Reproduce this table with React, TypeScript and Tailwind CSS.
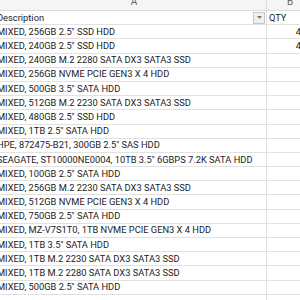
const rows: [string, string][] = [
  ['MIXED, 256GB 2.5" SSD HDD', "4"],
  ['MIXED, 240GB 2.5" SSD HDD', "4"],
  ["MIXED, 240GB M.2 2280 SATA DX3 SATA3 SSD", ""],
  ["MIXED, 256GB NVME PCIE GEN3 X 4 HDD", ""],
  ['MIXED, 500GB 3.5" SATA HDD', ""],
  ["MIXED, 512GB M.2 2230 SATA DX3 SATA3 SSD", ""],
  ['MIXED, 480GB 2.5" SSD HDD', ""],
  ['MIXED, 1TB 2.5" SATA HDD', ""],
  ['HPE, 872475-B21, 300GB 2.5" SAS HDD', ""],
  ['SEAGATE, ST10000NE0004, 10TB 3.5" 6GBPS 7.2K SATA HDD', ""],
  ['MIXED, 100GB 2.5" SATA HDD', ""],
  ["MIXED, 256GB M.2 2230 SATA DX3 SATA3 SSD", ""],
  ["MIXED, 512GB NVME PCIE GEN3 X 4 HDD", ""],
  ['MIXED, 750GB 2.5" SATA HDD', ""],
  ["MIXED, MZ-V7S1T0, 1TB NVME PCIE GEN3 X 4 HDD", ""],
  ['MIXED, 1TB 3.5" SATA HDD', ""],
  ["MIXED, 1TB M.2 2230 SATA DX3 SATA3 SSD", ""],
  ["MIXED, 1TB M.2 2280 SATA DX3 SATA3 SSD", ""],
  ['MIXED, 500GB 2.5" SATA HDD', ""],
  ["", ""],
];

export default function App() {
  return (
    <div className="w-[300px] h-[300px] overflow-hidden bg-white text-[#222] font-['Roboto',sans-serif] text-[9.3px]">
      {/* column letters */}
      <div className="flex h-[11px] bg-[#f5f5f5] border-b border-[#dcdcdc] text-[#666] text-[10px] leading-none">
        <div className="w-[267px] shrink-0 border-r border-[#dcdcdc] flex justify-center items-end pb-[3px]">
          <span className="pl-[2px]">A</span>
        </div>
        <div className="w-[46px] shrink-0 flex justify-center items-end pb-[3px]">B</div>
      </div>

      {/* header row */}
      <div className="flex h-[14.2px] border-b border-[#e1e1e1]">
        <div className="w-[267px] shrink-0 border-r border-[#e1e1e1] flex items-center justify-between">
          <span className="ml-[-3px] whitespace-nowrap">Description</span>
          <div className="w-[12px] h-[12px] mr-[1px] border border-[#c6c6c6] bg-[#f0f0f0] flex items-center justify-center">
            <svg width="5" height="3" viewBox="0 0 5 3">
              <path d="M0 0h5L2.5 3z" fill="#777" />
            </svg>
          </div>
        </div>
        <div className="w-[46px] shrink-0 flex items-center pl-[2px]">QTY</div>
      </div>

      {rows.map(([desc, qty], i) => (
        <div key={i} className="flex h-[14.2px] border-b border-[#e1e1e1]">
          <div className="w-[267px] shrink-0 border-r border-[#e1e1e1] flex items-center">
            <span className="ml-[-3px] whitespace-nowrap">{desc}</span>
          </div>
          <div className="w-[46px] shrink-0 flex items-center justify-end pr-[12px]">{qty}</div>
        </div>
      ))}
    </div>
  );
}
